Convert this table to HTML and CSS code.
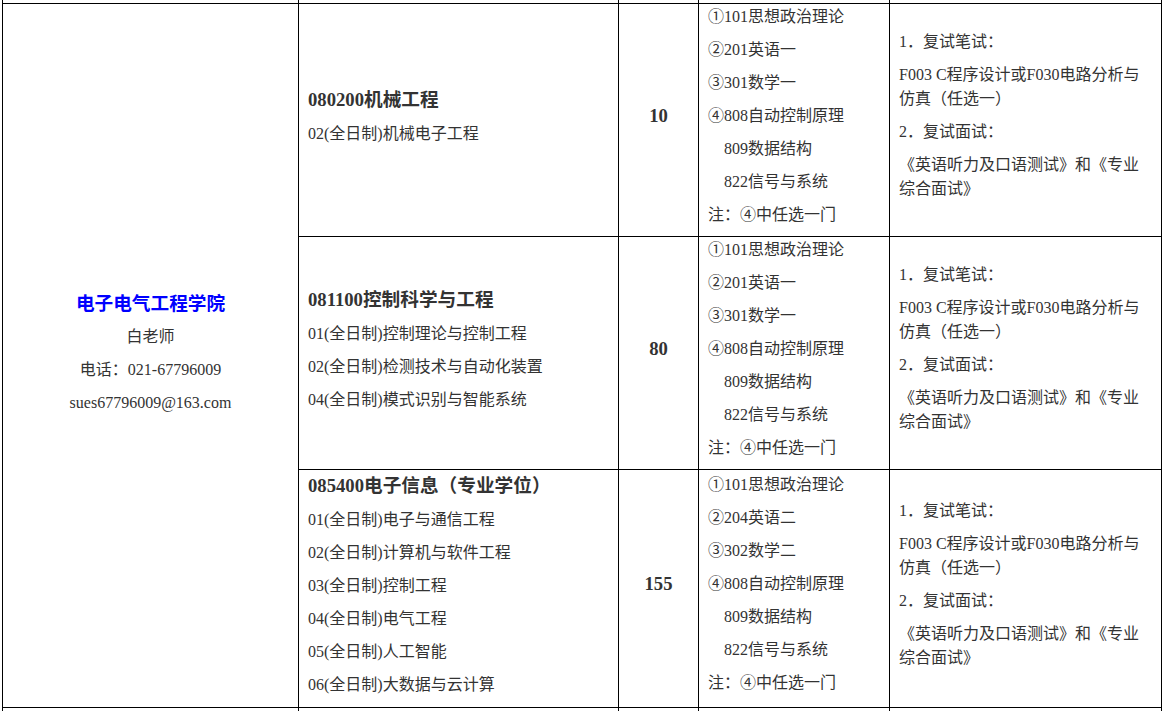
FILE: index.html
```html
<!DOCTYPE html>
<html lang="zh-CN">
<head>
<meta charset="utf-8">
<title>招生专业目录</title>
<link rel="stylesheet" href="styles.css">
</head>
<body>
<table class="grid">
  <colgroup>
    <col class="c-college">
    <col class="c-major">
    <col class="c-num">
    <col class="c-exam">
    <col class="c-retest">
  </colgroup>
  <tbody>
    <tr class="edge-top"><td></td><td></td><td></td><td></td><td></td></tr>
    <tr class="row-a">
      <td class="college" rowspan="3">
        <p class="college-name">电子电气工程学院</p>
        <p>白老师</p>
        <p>电话：021-67796009</p>
        <p>sues67796009@163.com</p>
      </td>
      <td class="major">
        <p class="major-title">080200机械工程</p>
        <p>02(全日制)机械电子工程</p>
      </td>
      <td class="num"><p>10</p></td>
      <td class="exam">
        <p>①101思想政治理论</p>
        <p>②201英语一</p>
        <p>③301数学一</p>
        <p>④808自动控制原理</p>
        <p class="indent">809数据结构</p>
        <p class="indent">822信号与系统</p>
        <p>注：④中任选一门</p>
      </td>
      <td class="retest">
        <p>1．复试笔试：</p>
        <p>F003 C程序设计或F030电路分析与仿真（任选一）</p>
        <p>2．复试面试：</p>
        <p>《英语听力及口语测试》和《专业综合面试》</p>
      </td>
    </tr>
    <tr class="row-b">
      <td class="major">
        <p class="major-title">081100控制科学与工程</p>
        <p>01(全日制)控制理论与控制工程</p>
        <p>02(全日制)检测技术与自动化装置</p>
        <p>04(全日制)模式识别与智能系统</p>
      </td>
      <td class="num"><p>80</p></td>
      <td class="exam">
        <p>①101思想政治理论</p>
        <p>②201英语一</p>
        <p>③301数学一</p>
        <p>④808自动控制原理</p>
        <p class="indent">809数据结构</p>
        <p class="indent">822信号与系统</p>
        <p>注：④中任选一门</p>
      </td>
      <td class="retest">
        <p>1．复试笔试：</p>
        <p>F003 C程序设计或F030电路分析与仿真（任选一）</p>
        <p>2．复试面试：</p>
        <p>《英语听力及口语测试》和《专业综合面试》</p>
      </td>
    </tr>
    <tr class="row-c">
      <td class="major">
        <p class="major-title">085400电子信息（专业学位）</p>
        <p>01(全日制)电子与通信工程</p>
        <p>02(全日制)计算机与软件工程</p>
        <p>03(全日制)控制工程</p>
        <p>04(全日制)电气工程</p>
        <p>05(全日制)人工智能</p>
        <p>06(全日制)大数据与云计算</p>
      </td>
      <td class="num"><p>155</p></td>
      <td class="exam">
        <p>①101思想政治理论</p>
        <p>②204英语二</p>
        <p>③302数学二</p>
        <p>④808自动控制原理</p>
        <p class="indent">809数据结构</p>
        <p class="indent">822信号与系统</p>
        <p>注：④中任选一门</p>
      </td>
      <td class="retest">
        <p>1．复试笔试：</p>
        <p>F003 C程序设计或F030电路分析与仿真（任选一）</p>
        <p>2．复试面试：</p>
        <p>《英语听力及口语测试》和《专业综合面试》</p>
      </td>
    </tr>
    <tr class="edge-bottom"><td></td><td></td><td></td><td></td><td></td></tr>
  </tbody>
</table>
</body>
</html>
```

FILE: styles.css
```css
html, body {
  margin: 0;
  padding: 0;
  background: #ffffff;
}

body {
  font-family: "Liberation Serif", "Noto Sans CJK SC", serif;
  font-size: 16px;
  color: #333333;
}

.grid {
  border-collapse: collapse;
  table-layout: fixed;
  width: 1159px;
  margin-left: 2px;
}

.c-college { width: 296px; }
.c-major { width: 320px; }
.c-num { width: 80px; }
.c-exam { width: 191px; }
.c-retest { width: 272px; }

.grid td {
  border: 1px solid #000000;
  padding: 0 9px;
  vertical-align: middle;
}

.grid p {
  margin: 0 0 9px;
  line-height: 24px;
  white-space: normal;
}

.edge-top td {
  border-top: none;
  height: 3px;
  padding: 0;
}

.edge-bottom td {
  border-bottom: none;
  height: 20px;
  padding: 0;
}

.row-a, .row-b { height: 233px; }
.row-c { height: 238px; }

.college {
  text-align: center;
}

.college-name {
  font-family: "Noto Sans CJK SC", sans-serif;
  font-weight: 700;
  font-size: 18.67px;
  color: #0000ff;
}

.college .college-name {
  line-height: 28px;
}

.major .major-title {
  font-weight: 700;
  font-size: 18.67px;
  line-height: 27px;
}

.num {
  text-align: center;
  font-weight: 700;
  font-size: 18.67px;
}

.indent {
  padding-left: 1em;
}
```
